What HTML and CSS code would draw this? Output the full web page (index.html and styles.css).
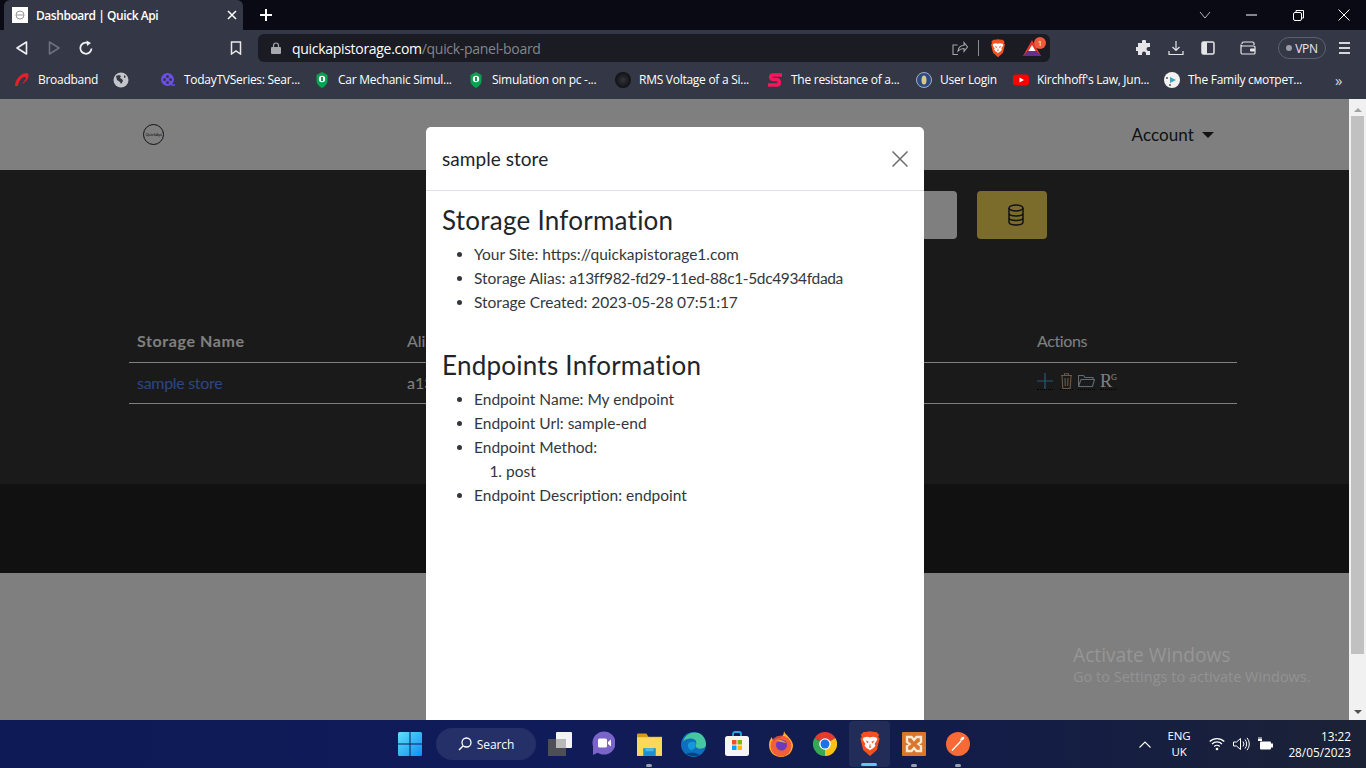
FILE: index.html
```html
<!DOCTYPE html>
<html lang="en">
<head>
<meta charset="utf-8">
<title>Dashboard | Quick Api</title>
<link rel="stylesheet" href="styles.css">
</head>
<body>
<svg class="defs" width="0" height="0">
  <symbol id="brave" viewBox="0 0 24 28">
    <path fill="#f4511e" d="M12 0l5 1 2 0 3 3-1 2 1.500 2-3 12.500-7.500 6.500-7.500-6.500L1.500 8 3 6 2 4l3-3 2 0z"/>
    <path fill="#fff" d="M5 7l4-1 3 1 3-1 4 1 1 2-3 5 1 2-2.500 2.500L13 20l-1 1-1-1-2.500-1.500L6 16l1-2-3-5z"/>
    <path fill="#f4511e" d="M7 10l3.500 1.500-1 2zM17 10l-3.500 1.500 1 2zM12 13l1 5h-2zM9 20.500l3 1.500 3-1.500-3 3.500z"/>
  </symbol>
  <symbol id="shield-green" viewBox="0 0 16 16">
    <path fill="#0aa14f" d="M8 0l5.500 3v6c0 3-2.800 5.500-5.500 7-2.700-1.500-5.500-4-5.500-7V3z"/>
    <circle cx="8" cy="7" r="3.200" fill="#fff"/>
    <path fill="#0aa14f" d="M7 5h2v4H7z"/>
  </symbol>
</svg>

<div class="tabstrip">
  <div class="tab">
    <span class="favicon"><svg viewBox="0 0 16 16" width="16" height="16"><circle cx="8" cy="8" r="4" fill="none" stroke="#999"/><path d="M4 8h8" stroke="#999"/></svg></span>
    <span class="tab-title">Dashboard | Quick Api</span>
    <svg class="tab-close" viewBox="0 0 10 10" width="10" height="10"><path d="M1 1l8 8M9 1l-8 8" stroke="#fff" stroke-width="1.500"/></svg>
  </div>
  <svg class="tab-new" viewBox="0 0 12 12" width="12" height="12"><path d="M6 0v12M0 6h12" stroke="#fff" stroke-width="2"/></svg>
  <div class="winctl">
    <svg class="w-chev" viewBox="0 0 12 8" width="12" height="8"><path d="M1 1l5 6 5-6" fill="none" stroke="#b4b4b8"/></svg>
    <svg class="w-min" viewBox="0 0 11 2" width="11" height="2"><path d="M0 1h11" stroke="#fff"/></svg>
    <svg class="w-max" viewBox="0 0 11 11" width="11" height="11"><path d="M3 2V.5h7.500V8H9" fill="none" stroke="#fff"/><rect x=".5" y="2.500" width="8" height="8" rx="1.500" fill="none" stroke="#fff"/></svg>
    <svg class="w-close" viewBox="0 0 12 12" width="12" height="12"><path d="M.5.500l11 11M11.500.500l-11 11" stroke="#fff"/></svg>
  </div>
</div>

<div class="toolbar">
  <svg class="tb-icon" viewBox="0 0 16 16" width="16" height="16"><path d="M12.500 2v12L3 8z" fill="none" stroke="#f0f0f2" stroke-width="1.600" stroke-linejoin="round"/></svg>
  <svg class="tb-icon" viewBox="0 0 16 16" width="16" height="16"><path d="M3.500 2v12L13 8z" fill="none" stroke="#6e717c" stroke-width="1.600" stroke-linejoin="round"/></svg>
  <svg class="tb-icon" viewBox="0 0 16 16" width="16" height="16"><path d="M13.500 8.500A5.600 5.600 0 1 1 9.500 2.800" fill="none" stroke="#f0f0f2" stroke-width="1.800"/><path d="M8.500 0.500l4.500 2.500-4 3z" fill="#f0f0f2"/></svg>
  <svg class="tb-book" viewBox="0 0 12 14" width="12" height="14"><path d="M1.500 1h9v12L6 10l-4.500 3z" fill="none" stroke="#e8e8ea" stroke-width="1.500"/></svg>
  <div class="omnibox">
    <svg class="lock" viewBox="0 0 10 12" width="10" height="12"><path d="M2.500 5V3.500a2.500 2.500 0 0 1 5 0V5" fill="none" stroke="#a8a9ae" stroke-width="1.200"/><rect y="5" width="10" height="7" rx="1" fill="#a8a9ae"/></svg>
    <span class="url"><span class="url-host">quickapistorage.com</span>/quick-panel-board</span>
    <span class="omni-right">
      <svg viewBox="0 0 16 16" width="16" height="16"><path d="M6 14.500H1V5h4.500M6 11c.5-3.500 3-5.500 6-5.500V2.500L15.500 7 12 11.500V8.500C9.500 8.500 7.500 9.500 6 11z" fill="none" stroke="#a4a5ab" stroke-width="1.100"/></svg>
      <span class="omni-sep"></span>
      <svg class="omni-brave" width="16" height="19"><use href="#brave"/></svg>
      <span class="bat">
        <svg viewBox="0 0 18 16" width="18" height="16"><path d="M9 0l9 16H0z" fill="#e8352a"/><path d="M0 16l4.500-5h9L18 16z" fill="#662d91"/><path d="M9 5l3.500 6h-7z" fill="#fff"/></svg>
        <span class="bat-badge">1</span>
      </span>
    </span>
  </div>
  <svg class="tb-puzzle" viewBox="0 0 16 16" width="16" height="16"><path fill="#e6e6e8" d="M6 1.500a2 2 0 0 1 4 0V3h4v4h-1.500a2 2 0 0 0 0 4H14v4H10v-1.500a2 2 0 0 0-4 0V15H2v-4H.5a2 2 0 0 1 0-4H2V3h4z"/></svg>
  <svg class="tb-right" viewBox="0 0 16 16" width="16" height="16"><path d="M8 1v9M4.500 7L8 10.500 11.500 7M1 11v3.500h14V11" fill="none" stroke="#e6e6e8" stroke-width="1.200"/></svg>
  <svg class="tb-right" viewBox="0 0 16 16" width="16" height="16"><rect x="2" y="2" width="12" height="12" rx="1.500" fill="none" stroke="#e6e6e8" stroke-width="1.500"/><rect x="2" y="2" width="5" height="12" fill="#e6e6e8"/></svg>
  <svg class="tb-wallet" viewBox="0 0 16 16" width="16" height="16"><path d="M2 4V3.500A1.500 1.500 0 0 1 3.500 2h9A1.500 1.500 0 0 1 14 3.500V5M1 4.500A1.500 1.500 0 0 0 2.500 6H14a1 1 0 0 1 1 1v6a1 1 0 0 1-1 1H2.500A1.500 1.500 0 0 1 1 12.500z" fill="none" stroke="#e6e6e8" stroke-width="1.200"/><rect x="10" y="8.500" width="5" height="3" rx="1" fill="#e6e6e8"/></svg>
  <span class="vpn"><span class="vpn-dot"></span>VPN</span>
  <svg class="tb-menu" viewBox="0 0 11 12" width="11" height="12"><path d="M0 1h11M0 6h11M0 11h11" stroke="#d8d8da" stroke-width="2"/></svg>
</div>

<div class="bookmarks">
  <div class="bm"><svg viewBox="0 0 16 16" width="16" height="16"><path fill="#e5202a" d="M1 14C1 8 6 2 12 1c3 0 3 3 2 5-1 3-4 5-6 6 1-2 4-4 4-6 0-2-3-1-5 1-2 2-3 5-3 7z"/></svg><span>Broadband</span></div>
  <div class="bm"><svg viewBox="0 0 16 16" width="16" height="16"><circle cx="8" cy="8" r="7.500" fill="#c4c5c9"/><path fill="#343846" d="M3 4l3-1 2 1-1 2 2 1 1 2-2 3-1-2-3-2zM11 3l2 2-2 1z"/></svg></div>
  <div class="bm"><svg viewBox="0 0 16 16" width="16" height="16"><circle cx="7.500" cy="7.500" r="6.500" fill="#6b4fe8"/><circle cx="7.500" cy="4.500" r="1.500" fill="#343846"/><circle cx="7.500" cy="10.500" r="1.500" fill="#343846"/><circle cx="4.500" cy="7.500" r="1.500" fill="#343846"/><circle cx="10.500" cy="7.500" r="1.500" fill="#343846"/><path d="M11 13h4" stroke="#6b4fe8" stroke-width="1.500"/></svg><span>TodayTVSeries: Sear...</span></div>
  <div class="bm"><svg width="16" height="16"><use href="#shield-green"/></svg><span>Car Mechanic Simul...</span></div>
  <div class="bm"><svg width="16" height="16"><use href="#shield-green"/></svg><span>Simulation on pc -...</span></div>
  <div class="bm"><svg viewBox="0 0 16 16" width="16" height="16"><defs><radialGradient id="rms"><stop offset="0" stop-color="#33343a"/><stop offset="1" stop-color="#101014"/></radialGradient></defs><circle cx="8" cy="8" r="8" fill="url(#rms)"/></svg><span>RMS Voltage of a Si...</span></div>
  <div class="bm"><svg viewBox="0 0 16 16" width="16" height="16"><path fill="none" stroke="#f5175c" stroke-width="3.600" d="M15 3H6C3 3 3 7 6 7.500h4c3 .5 3 5.500 0 5.500H1"/></svg><span>The resistance of a...</span></div>
  <div class="bm"><svg viewBox="0 0 16 16" width="16" height="16"><circle cx="8" cy="8" r="7.500" fill="#2c4a80" stroke="#a4aec4"/><ellipse cx="8" cy="8" rx="2.500" ry="4.500" fill="#d8c98a"/></svg><span>User Login</span></div>
  <div class="bm"><svg viewBox="0 0 16 16" width="16" height="16"><rect y="2.500" width="16" height="11" rx="3" fill="#f00"/><path d="M6.500 5.500v5L11 8z" fill="#fff"/></svg><span>Kirchhoff's Law, Jun...</span></div>
  <div class="bm"><svg viewBox="0 0 16 16" width="16" height="16"><circle cx="8" cy="8" r="8" fill="#f2f2f2"/><path d="M6 5l6 3-6 3z" fill="#38a7c0"/><circle cx="3" cy="6" r="1" fill="#555"/><circle cx="6" cy="13" r="1" fill="#555"/></svg><span>The Family смотрет...</span></div>
  <div class="bm-more">»</div>
</div>

<div class="viewport">
  <div class="page">
    <header class="site-header">
      <span class="logo"><span class="logo-text">QuickApi</span></span>
      <span class="account">Account<span class="caret"></span></span>
    </header>
    <main class="site-main">
      <div class="search-row">
        <div class="search-input"></div>
        <button class="search-btn" type="button">
          <svg viewBox="0 0 16 22" width="16" height="22"><g fill="none" stroke="#212529" stroke-width="1.500"><ellipse cx="8" cy="4" rx="7" ry="3"/><path d="M1 4v14c0 1.700 3 3 7 3s7-1.300 7-3V4M1 9c0 1.700 3 3 7 3s7-1.300 7-3M1 13.500c0 1.700 3 3 7 3s7-1.300 7-3"/></g></svg>
        </button>
      </div>
      <table class="store-table">
        <colgroup><col class="c-name"><col class="c-alias"><col class="c-act"></colgroup>
        <thead>
          <tr><th class="th-bold">Storage Name</th><th>Alias</th><th class="th-act">Actions</th></tr>
        </thead>
        <tbody>
          <tr>
            <td><a class="store-link" href="#">sample store</a></td>
            <td>a13</td>
            <td>
              <span class="actions">
                <svg class="act" viewBox="0 0 16 16" width="16" height="17"><path d="M8 0v16M0 8h16" stroke="#4bb6e6" stroke-width="1.200"/></svg>
                <span class="act act-trash"><svg viewBox="0 0 12 16" width="13" height="16"><path d="M4 2V.8h4V2M.5 2.500h11M1.500 2.500l.8 13h7.400l.8-13M4.500 5l.3 8M7.500 5l-.3 8" fill="none" stroke="#d8b08a" stroke-width="1.100"/></svg></span>
                <svg class="act" viewBox="0 0 17 14" width="17" height="17"><path d="M.5 12.500V1.500h5l1.500 2h8v2M.5 12.500l2.500-7h13.500l-2 7z" fill="none" stroke="#c0d4e0" stroke-width="1.100"/></svg>
                <span class="act act-r">R<sup>G</sup></span>
              </span>
            </td>
          </tr>
        </tbody>
      </table>
    </main>
    <footer class="site-footer"></footer>

    <div class="overlay">
      <section class="modal">
        <div class="modal-head">
          <h5 class="modal-title">sample store</h5>
          <svg class="modal-close" viewBox="0 0 16 16" width="16" height="16"><path d="M.5.500l15 15M15.500.500l-15 15" stroke="#6c6c6c" stroke-width="1.500"/></svg>
        </div>
        <div class="modal-body">
          <h3 class="sec-title">Storage Information</h3>
          <ul class="info">
            <li>Your Site: https://quickapistorage1.com</li>
            <li>Storage Alias: <span class="tight">a13ff982-fd29-11ed-88c1-5dc4934fdada</span></li>
            <li>Storage Created: <span class="tighter">2023-05-28 07:51:17</span></li>
          </ul>
          <h3 class="sec-title sec-second">Endpoints Information</h3>
          <ul class="info">
            <li>Endpoint Name: My endpoint</li>
            <li>Endpoint Url: sample-end</li>
            <li>Endpoint Method:
              <ol class="methods"><li>post</li></ol>
            </li>
            <li>Endpoint Description: endpoint</li>
          </ul>
        </div>
      </section>
    </div>

    <div class="activate">
      <div class="activate-a">Activate Windows</div>
      <div class="activate-b">Go to Settings to activate Windows.</div>
    </div>
  </div>
  <div class="scrollbar">
    <span class="sb-up"></span>
    <span class="sb-thumb"></span>
    <span class="sb-down"></span>
  </div>
</div>

<div class="taskbar">
  <div class="tb-center">
    <span class="tk tk-start"><svg viewBox="0 0 24 24" width="24" height="24"><defs><linearGradient id="win" x1="0" y1="0" x2="1" y2="1"><stop offset="0" stop-color="#5fe0fb"/><stop offset="1" stop-color="#0f8fef"/></linearGradient></defs><path fill="url(#win)" d="M0 1.500A1.500 1.500 0 0 1 1.500 0h10v11.500H0zM12.500 0h10A1.500 1.500 0 0 1 24 1.500v10H12.500zM0 12.500h11.500V24h-10A1.500 1.500 0 0 1 0 22.500zM12.500 12.500H24v10a1.500 1.500 0 0 1-1.500 1.500h-10z"/></svg></span>
    <span class="tk-search"><svg viewBox="0 0 14 14" width="14" height="14"><circle cx="8.500" cy="5.500" r="4.500" fill="none" stroke="#fff" stroke-width="1.300"/><path d="M5 9l-4 4" stroke="#fff" stroke-width="1.500"/></svg>Search</span>
    <span class="tk tk-view"><svg viewBox="0 0 24 24" width="24" height="24"><rect x="8" width="16" height="16" rx="1" fill="#f4f4f4"/><rect y="7" width="18" height="18" rx="1" fill="#555" fill-opacity=".9"/><rect x="8" y="7" width="10" height="9" fill="#b8b8b8"/></svg></span>
    <span class="tk tk-meet"><svg viewBox="0 0 24 26" width="24" height="26"><circle cx="13" cy="12" r="11.500" fill="#7a63c9"/><path d="M2 12v12l6-3z" fill="#7a63c9"/><rect x="7" y="7.500" width="9" height="9" rx="1.500" fill="#fff"/><path d="M17 11l3-2.500v7l-3-2.500z" fill="#fff"/></svg></span>
    <span class="tk"><svg viewBox="0 0 24 24" width="25" height="25"><path fill="#d79a12" d="M0 2.500A1 1 0 0 1 1 1.500h8l2 3h13v3H0z"/><path fill="#fbd75b" d="M0 5h24v18H0z"/><path fill="#1c8fd0" d="M6 15.500h12v7.500H6z"/><path fill="#4fb4e6" d="M8 15.500h8v3H8z"/></svg><i class="dot"></i></span>
    <span class="tk"><svg viewBox="0 0 24 24" width="25" height="25"><circle cx="12" cy="12" r="12" fill="#0f6fbf"/><path fill="#45c8a0" d="M2 9C4 2 11-1 17 1c5 2 7 7 7 11 0 3-3 4-6 4-2 0-4-1-4-3 1-1 1-3 0-5-3-3-9-2-12 1z"/><path fill="#1499dc" d="M14 13c0 3-3 5-5 4-2-1-3-4-2-6 2-2 5-2 7-1z"/><path fill="#0b3f82" d="M5 21c3 2 9 3 13 1l-5-2c-3 0-6-.500-8 1z"/></svg></span>
    <span class="tk"><svg viewBox="0 0 24 26" width="24" height="26"><path d="M8 6V3a2 2 0 0 1 2-2h4a2 2 0 0 1 2 2v3" fill="none" stroke="#28a8e0" stroke-width="1.800"/><rect y="5" width="24" height="20" rx="2.500" fill="#f5f5f5"/><rect x="7" y="9" width="4.500" height="4.500" fill="#f25022"/><rect x="12.500" y="9" width="4.500" height="4.500" fill="#7fba00"/><rect x="7" y="14.500" width="4.500" height="4.500" fill="#00a4ef"/><rect x="12.500" y="14.500" width="4.500" height="4.500" fill="#ffb900"/></svg></span>
    <span class="tk"><svg viewBox="0 0 24 26" width="24" height="26"><path fill="#ffb02e" d="M15 0c1 4 8 7 9 14 0 7-5 12-12 12S0 21 0 14c0-3 1-6 3-8 0 2 1 3 2 4 1-2 4-3 6-3 3-2 4-4 4-7z"/><circle cx="12" cy="15" r="10.500" fill="#f3503d" fill-opacity=".85"/><circle cx="12.500" cy="14" r="5.500" fill="#6c3cb8"/><path fill="#ff9a2e" d="M7 10c3-2 8-1 10 2-3-1-6-1-10-2z"/></svg></span>
    <span class="tk"><svg viewBox="0 0 24 24" width="24" height="24"><path fill="#e33b2e" d="M12 12L1.600 6A12 12 0 0 1 22.400 6z"/><path fill="#fbc116" d="M12 12L22.400 6A12 12 0 0 1 12 24z"/><path fill="#34a853" d="M12 12L12 24A12 12 0 0 1 1.600 6z"/><circle cx="12" cy="12" r="5.800" fill="#fff"/><circle cx="12" cy="12" r="4.500" fill="#1a73e8"/></svg></span>
    <span class="tk tk-active"><svg width="22" height="26"><use href="#brave"/></svg><i class="dot-active"></i></span>
    <span class="tk"><svg viewBox="0 0 24 24" width="24" height="24"><rect width="24" height="24" rx="1" fill="#d9762c"/><path fill="none" stroke="#fbe8d4" stroke-width="2.400" d="M5 5h4.500l2.500 3 2.500-3H19v5l-2.500 2 2.500 2v5h-4.500L12 16l-2.500 3H5v-5l2.500-2L5 10z"/></svg><i class="dot"></i></span>
    <span class="tk"><svg viewBox="0 0 24 24" width="24" height="24"><circle cx="12" cy="12" r="12" fill="#f76935"/><path d="M6 18.500L15 9" stroke="#fff" stroke-width="1.300"/><path d="M14 8c1-3 3-4 4-3s0 3-3 4z" fill="#fff"/></svg><i class="dot"></i></span>
  </div>
  <div class="tray">
    <svg class="t-caret" viewBox="0 0 12 7" width="12" height="7"><path d="M.5 6.500L6 1l5.500 5.500" fill="none" stroke="#fff" stroke-width="1.100"/></svg>
    <span class="lang">ENG<br>UK</span>
    <svg class="t-wifi" viewBox="0 0 16 14" width="16" height="14"><g fill="none" stroke="#fff" stroke-width="1.200"><path d="M.7 4.500a10.500 10.500 0 0 1 14.600 0M3 7a7 7 0 0 1 10 0M5.300 9.500a3.500 3.500 0 0 1 5.400 0"/></g><circle cx="8" cy="12" r="1.300" fill="#fff"/></svg>
    <svg class="t-vol" viewBox="0 0 17 14" width="17" height="14"><g fill="none" stroke="#fff"><path d="M.5 5v4h3l4 3.500v-11L3.500 5zM10 4.500a4 4 0 0 1 0 5M12 2.500a7 7 0 0 1 0 9M14 .8a9.500 9.500 0 0 1 0 12.400"/></g></svg>
    <svg class="t-bat" viewBox="0 0 16 14" width="16" height="14"><path d="M2 0v2M4 0v2" stroke="#fff"/><path d="M1 2h4v2H1z" fill="#fff"/><rect x="3" y="4.500" width="11" height="8" rx="1" fill="#fff"/><rect x="14" y="6.500" width="2" height="4" fill="#fff"/></svg>
    <span class="clock">13:22<br>28/05/2023</span>
  </div>
</div>
</body>
</html>
```
FILE: styles.css
```css
* { box-sizing: border-box; }
html, body { margin: 0; height: 768px; overflow: hidden; }
body {
  display: flex;
  flex-direction: column;
  width: 1366px;
  font-family: "Open Sans", "Noto Sans", sans-serif;
  background: #343846;
}
.defs { position: absolute; }
svg { display: block; flex: none; }

/* browser chrome */
.tabstrip {
  height: 30px;
  flex: none;
  background: #0a0a14;
  display: flex;
  align-items: flex-end;
  padding-left: 4px;
}
.tab {
  width: 239px;
  height: 30px;
  background: #343846;
  border-radius: 6px 6px 0 0;
  display: flex;
  align-items: center;
  padding-left: 8px;
}
.favicon { width: 16px; height: 16px; background: #fff; margin-right: 8px; }
.tab-title {
  color: #fff;
  font-size: 12px;
  font-weight: 600;
  letter-spacing: -0.45px;
  white-space: nowrap;
}
.tab-close { margin-left: auto; margin-right: 6px; }
.tab-new { margin: 0 0 9px 17px; }
.winctl { margin-left: auto; height: 30px; display: flex; align-items: center; }
.w-chev { margin-right: 35px; }
.w-min { margin-right: 36px; }
.w-max { margin-right: 34px; }
.w-close { margin-right: 16px; }

.toolbar {
  height: 32px;
  flex: none;
  background: #343846;
  display: flex;
  align-items: center;
  padding: 4px 0 0 14px;
}
.tb-icon { margin-right: 16px; }
.tb-book { margin-left: 120px; margin-right: 16px; }
.omnibox {
  width: 792px;
  height: 28px;
  background: #1a1b23;
  border-radius: 6px;
  display: flex;
  align-items: center;
  padding: 0 9px 0 13px;
}
.lock { margin-right: 11px; }
.url { font-size: 14px; color: #85868c; letter-spacing: -0.3px; white-space: nowrap; }
.url-host { color: #fff; }
.omni-right { margin-left: auto; display: flex; align-items: center; }
.omni-sep { width: 1px; height: 16px; background: #8a8b91; margin: 0 11px 0 10px; }
.omni-brave { margin-right: 17px; }
.bat { position: relative; display: block; }
.bat-badge {
  position: absolute;
  top: -3px;
  right: -5px;
  width: 12px;
  height: 12px;
  border-radius: 50%;
  background: #f0593a;
  color: #fff;
  font-size: 8px;
  line-height: 12px;
  text-align: center;
}
.tb-puzzle { margin-left: 86px; }
.tb-right { margin-left: 16px; }
.tb-wallet { margin-left: 24px; }
.vpn {
  margin-left: 22px;
  width: 48px;
  height: 22px;
  border: 1px solid #5d606c;
  border-radius: 11px;
  color: #e6e6e8;
  font-size: 12px;
  letter-spacing: -0.3px;
  display: flex;
  align-items: center;
  justify-content: center;
  gap: 3px;
}
.vpn-dot { width: 6px; height: 6px; border-radius: 50%; background: #9a9ca6; }
.tb-menu { margin-left: 13px; }

.bookmarks {
  height: 37px;
  flex: none;
  background: #343846;
  padding: 0 0 2px 14px;
  display: grid;
  grid-template-columns: 99px 47px 154px 154px 147px 152px 149px 97px 151px 171px 1fr;
  align-items: center;
  color: #fff;
  font-size: 12px;
  letter-spacing: -0.27px;
}
.bm { display: flex; align-items: center; gap: 8px; white-space: nowrap; }
.bm-more { color: #d8d8da; font-size: 15px; }

/* page */
.viewport { flex: 1; display: flex; min-height: 0; }
.page {
  position: relative;
  flex: 1;
  overflow: hidden;
  background: #fff;
  font-family: "Lato", sans-serif;
}
.site-header {
  height: 71px;
  display: flex;
  align-items: center;
  justify-content: space-between;
  padding: 0 135px 0 143px;
}
.logo {
  width: 21px;
  height: 21px;
  border: 1px solid #222;
  border-radius: 50%;
  display: flex;
  align-items: center;
  justify-content: center;
}
.logo-text { font-size: 4px; color: #222; white-space: nowrap; }
.account { display: flex; align-items: center; font-size: 17px; color: #212529; letter-spacing: .1px; }
.caret {
  width: 0;
  height: 0;
  border: 6px solid transparent;
  border-top-color: #212529;
  border-bottom: 0;
  margin-left: 8px;
}
.site-main { height: 314px; background: #343434; padding-top: 21px; }
.search-row { display: flex; justify-content: flex-end; gap: 20px; padding-right: 302px; }
.search-input { width: 500px; height: 48px; background: #fff; border-radius: 4px; }
.search-btn {
  width: 70px;
  height: 48px;
  border: 0;
  border-radius: 4px;
  background: #f8d858;
  display: flex;
  align-items: center;
  justify-content: center;
  padding: 0 0 0 8px;
}
.store-table {
  width: 1108px;
  margin: 81px 0 0 129px;
  border-collapse: collapse;
  table-layout: fixed;
  color: #fff;
  font-size: 16px;
}
.c-name { width: 270px; }
.c-alias { width: 630px; }
.c-act { width: 208px; }
.store-table th,
.store-table td {
  padding: 0 8px;
  text-align: left;
  font-weight: 400;
  white-space: nowrap;
  border-bottom: 1px solid #fff;
}
.store-table th { height: 42px; }
.store-table td { height: 41px; }
.store-table .th-bold { font-weight: 700; letter-spacing: .6px; }
.store-table .th-act { letter-spacing: -.4px; }
.store-link { color: #5a8cff; text-decoration: none; letter-spacing: -.3px; }
.actions { display: flex; align-items: center; gap: 5px; margin-top: -3px; }
.act { border-bottom: 1px dotted #000; }
.act-trash { display: block; margin-left: 2px; }
.act-r {
  display: block;
  width: 16px;
  height: 17px;
  font-family: "Liberation Serif", serif;
  font-size: 18px;
  line-height: 17px;
  letter-spacing: -1px;
}
.act-r sup { font-family: "Lato", sans-serif; font-size: 8px; line-height: 0; vertical-align: 7px; letter-spacing: 0; }
.site-footer { height: 89px; background: #232323; }

.overlay {
  position: absolute;
  inset: 0;
  background: rgba(0, 0, 0, .5);
  display: flex;
  justify-content: center;
  padding: 28px 0 0 1px;
}
.modal {
  width: 498px;
  height: 700px;
  background: #fff;
  border-radius: 5px;
  color: #212529;
}
.modal-head {
  height: 64px;
  border-bottom: 1px solid #dee2e6;
  display: flex;
  align-items: center;
  justify-content: space-between;
  padding: 0 16px;
}
.modal-title { margin: 0; font-size: 19px; font-weight: 400; letter-spacing: .05px; }
.modal-body { padding: 11px 16px 0; }
.sec-title { margin: 0 0 4px; font-size: 26px; line-height: 36px; font-weight: 400; letter-spacing: .25px; }
.sec-second { margin-top: 33px; }
.info { margin: 0; padding-left: 32px; font-size: 15.500px; line-height: 24px; color: #33373c; }
.tight { letter-spacing: -.36px; }
.tighter { letter-spacing: -.15px; }
.methods { margin: 0; padding-left: 32px; }

.activate {
  position: absolute;
  left: 1073px;
  top: 543px;
  white-space: nowrap;
  font-family: "Open Sans", sans-serif;
}
.activate-a { font-size: 19.200px; line-height: 25px; color: #969696; }
.activate-b { font-size: 14.500px; line-height: 20px; color: #939393; }

.scrollbar {
  width: 17px;
  flex: none;
  background: #f1f1f1;
  display: flex;
  flex-direction: column;
  align-items: center;
  padding: 9px 0 6px;
}
.sb-up, .sb-down { width: 0; height: 0; border: 4px solid transparent; }
.sb-up { border-bottom-color: #a3a3a3; border-top: 0; }
.sb-down { border-top-color: #505050; border-bottom: 0; }
.sb-thumb { width: 13px; height: 538px; background: #c1c1c1; margin: 4px 0 auto; }

/* taskbar */
.taskbar {
  height: 48px;
  flex: none;
  display: flex;
  align-items: center;
  color: #fff;
  font-family: "Open Sans", sans-serif;
  background: linear-gradient(90deg, #0e1a55 0%, #101c5a 40%, #121c48 70%, #1b2236 100%);
  position: relative;
}
.tb-center { display: flex; align-items: center; padding-left: 388px; }
.tk {
  position: relative;
  width: 44px;
  height: 46px;
  display: flex;
  align-items: center;
  justify-content: center;
}
.tk-start { margin-right: 4px; }
.tk-view { margin: 0 -1px 0 2px; }
.tk-meet { margin-right: 2px; }
.tk-search {
  width: 100px;
  height: 32px;
  border-radius: 16px;
  background: rgba(255, 255, 255, .09);
  display: flex;
  align-items: center;
  justify-content: center;
  gap: 5px;
  font-size: 12px;
  letter-spacing: -.1px;
}
.dot {
  position: absolute;
  bottom: 0;
  left: 19px;
  width: 6px;
  height: 3px;
  border-radius: 2px;
  background: #9aa0b0;
}
.tk-active { background: rgba(255, 255, 255, .07); border-radius: 4px; width: 41px; margin: 0 2px 0 2px; }
.dot-active {
  position: absolute;
  bottom: 1px;
  left: 12px;
  width: 16px;
  height: 3px;
  border-radius: 2px;
  background: #5cc8f5;
}
.tray { position: absolute; left: 0; top: 0; right: 0; bottom: 0; display: flex; align-items: center; padding-left: 1139px; pointer-events: none; }
.lang { width: 36px; margin-left: 10px; text-align: center; font-size: 11.500px; line-height: 16px; letter-spacing: -.1px; }
.t-wifi { margin-left: 12px; }
.t-vol { margin-left: 8px; }
.t-bat { margin-left: 7px; }
.clock { margin-left: auto; margin-right: 15px; text-align: right; font-size: 11.800px; line-height: 16px; }
```
